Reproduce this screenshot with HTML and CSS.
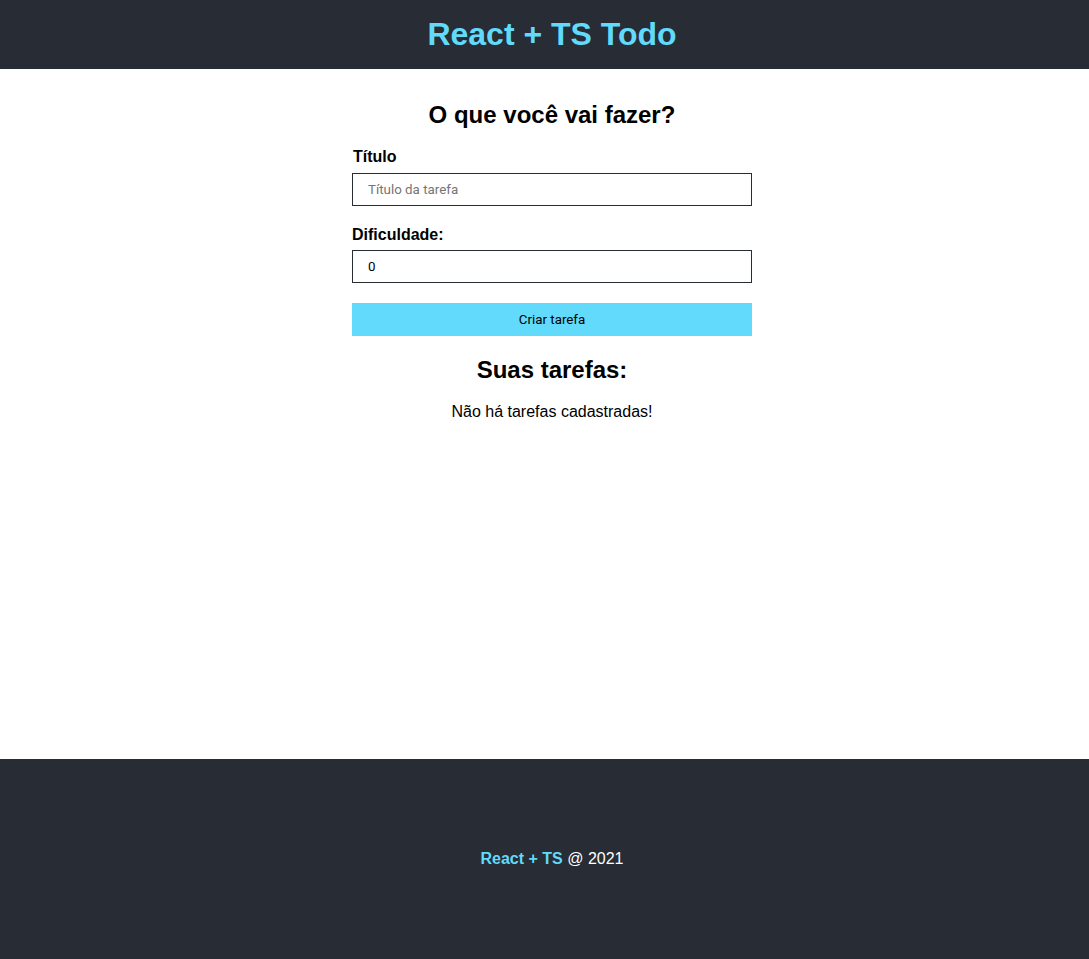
FILE: index.html
```html
<!DOCTYPE html>
<html lang="pt-BR">
<head>
<meta charset="utf-8">
<title>React + TS Todo</title>
<link rel="stylesheet" href="styles.css">
</head>
<body>
<header class="header">
  <h1 class="header-title">React + TS Todo</h1>
</header>
<main class="main">
  <div class="container">
    <h2 class="section-title">O que você vai fazer?</h2>
    <form class="form">
      <div class="form-control">
        <label class="label label-first" for="title">Título</label>
        <input class="input" id="title" type="text" placeholder="Título da tarefa">
      </div>
      <div class="form-control">
        <label class="label label-second" for="difficulty">Dificuldade:</label>
        <input class="input" id="difficulty" type="text" value="0">
      </div>
      <button class="button" type="button">Criar tarefa</button>
    </form>
    <h2 class="section-title tasks-title">Suas tarefas:</h2>
    <p class="empty">Não há tarefas cadastradas!</p>
  </div>
</main>
<footer class="footer">
  <p class="footer-text"><span class="footer-brand">React + TS</span> @ 2021</p>
</footer>
</body>
</html>
```
FILE: styles.css
```css
* { box-sizing: border-box; }
html, body { margin: 0; padding: 0; }
body {
  font-family: "Liberation Sans", Arial, sans-serif;
  color: #000;
  background: #fff;
}
.header {
  background: #282c34;
  height: 69px;
  display: flex;
  align-items: center;
  justify-content: center;
  padding-left: 15px;
}
.header-title {
  margin: 0;
  color: #61dafb;
  font-size: 32px;
  font-weight: 700;
  line-height: 37px;
}
.main {
  height: 690px;
  display: flex;
  justify-content: center;
  padding-left: 15px;
}
.container {
  width: 400px;
  display: flex;
  flex-direction: column;
  padding-top: 32px;
}
.section-title {
  margin: 0;
  font-size: 24px;
  font-weight: 700;
  line-height: 28px;
  text-align: center;
}
.form {
  display: flex;
  flex-direction: column;
  margin-top: 19px;
}
.form-control {
  display: flex;
  flex-direction: column;
  margin-bottom: 19px;
}
.label {
  font-size: 16px;
  font-weight: 700;
  line-height: 18px;
  margin-bottom: 7px;
}
.label-first { padding-left: 1px; }
.label-second { margin-top: 1px; margin-bottom: 6px; }
.input {
  height: 33px;
  border: 1px solid #282c34;
  padding: 0 15px;
  font-family: Roboto, "Liberation Sans", sans-serif;
  font-size: 13.33px;
  color: #000;
  outline: none;
}
.input::placeholder { color: #757575; }
.button {
  margin-top: 1px;
  height: 33px;
  border: none;
  background: #61dafb;
  font-family: Roboto, "Liberation Sans", sans-serif;
  font-size: 13.33px;
  color: #000;
}
.tasks-title { margin-top: 20px; }
.empty {
  margin: 19px 0 0;
  font-size: 16px;
  line-height: 18px;
  text-align: center;
}
.footer {
  background: #282c34;
  height: 200px;
  display: flex;
  align-items: center;
  justify-content: center;
  padding-left: 15px;
}
.footer-text {
  margin: 0;
  color: #fff;
  font-size: 16px;
  line-height: 18px;
}
.footer-brand {
  color: #61dafb;
  font-weight: 700;
}
```
